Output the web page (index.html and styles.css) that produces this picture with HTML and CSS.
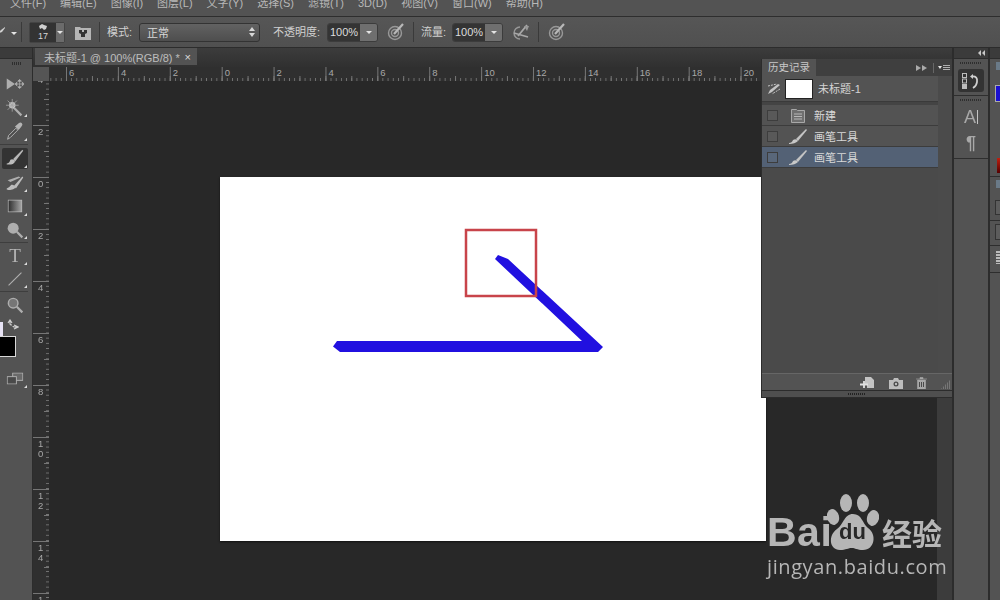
FILE: index.html
```html
<!DOCTYPE html>
<html lang="zh">
<head>
<meta charset="utf-8">
<title>Photoshop</title>
<link rel="stylesheet" href="styles.css">
</head>
<body>
<div class="app">
  <nav class="menu">
    <span>文件(F)</span><span>编辑(E)</span><span>图像(I)</span><span>图层(L)</span><span>文字(Y)</span><span>选择(S)</span><span>滤镜(T)</span><span>3D(D)</span><span>视图(V)</span><span>窗口(W)</span><span>帮助(H)</span>
  </nav>
  <div class="options">
    <svg class="opt-lead" width="14" height="14" viewBox="0 0 14 14"><path d="M-3 10 L1 6 L5 3 L5 4 L2 8 Z" fill="#cfcfcf"/></svg>
    <i class="caret lead-caret"></i>
    <i class="vsep sep-a"></i>
    <div class="preset">
      <div class="preset-well">
        <svg width="10" height="8" viewBox="0 0 10 8"><path d="M1 3 L4 1 L6 2 L9 3 L8 6 L6 7 L4 5 L2 6Z" fill="#d0d0d0"/></svg>
        <span>17</span>
      </div>
      <div class="preset-btn"><i class="caret"></i></div>
    </div>
    <svg class="folder" width="16" height="15" viewBox="0 0 16 15"><path d="M0 2h5l1 1h10v12H0z" fill="#b5b5b5"/><path d="M4 5h3v2h2V5h3v3l-2 1v3H6V9L4 8z" fill="#333"/></svg>
    <i class="vsep sep-b"></i>
    <label class="opt-label mode-label">模式:</label>
    <div class="select"><span>正常</span><svg width="6" height="10" viewBox="0 0 6 10"><path d="M3 0l3 4H0zM3 10l3-4H0z" fill="#d8d8d8"/></svg></div>
    <label class="opt-label opacity-label">不透明度:</label>
    <div class="num"><span>100%</span><b><i class="caret"></i></b></div>
    <svg class="air air-a" width="18" height="18" viewBox="0 0 18 18"><circle cx="8" cy="10" r="6.500" fill="none" stroke="#989898" stroke-width="1.400"/><circle cx="8" cy="10" r="3.500" fill="none" stroke="#989898" stroke-width="1.400"/><path d="M7 11 L16 1" stroke="#b8b8b8" stroke-width="2.200"/></svg>
    <i class="vsep sep-c"></i>
    <label class="opt-label flow-label">流量:</label>
    <div class="num"><span>100%</span><b><i class="caret"></i></b></div>
    <svg class="air air-b" width="18" height="18" viewBox="0 0 18 18"><path d="M8 4a6 6 0 1 0 0 12" fill="none" stroke="#989898" stroke-width="1.400"/><path d="M2 10 L16 14 M6 13 L15 2" stroke="#a8a8a8" stroke-width="1.800"/><path d="M12 3 L17 3 L15 8Z" fill="#989898"/></svg>
    <i class="vsep sep-d"></i>
    <svg class="air air-c" width="18" height="18" viewBox="0 0 18 18"><circle cx="8" cy="10" r="6.500" fill="none" stroke="#989898" stroke-width="1.400"/><circle cx="8" cy="10" r="3.500" fill="none" stroke="#989898" stroke-width="1.400"/><path d="M7 11 L16 1" stroke="#b8b8b8" stroke-width="2.200"/></svg>
  </div>

  <div class="main">
    <aside class="tools">
      <div class="dock-top"></div>
      <div class="grip tools-grip"></div>
      <div class="tool-list">
        <div class="tool t-move"><svg width="20" height="14" viewBox="0 0 20 14"><path d="M1 1 L10 7 L1 13Z" fill="#aeaeae"/><path d="M15 3v8M11 7h8M15 2l-2 2h4zM15 12l-2-2h4zM10 7l2-2v4zM20 7l-2-2v4z" stroke="#aeaeae" fill="#aeaeae" stroke-width=".8"/></svg></div>
        <div class="tool t-wand"><svg width="20" height="20" viewBox="0 0 20 20"><path d="M8 9 L17 18" stroke="#aeaeae" stroke-width="2.400"/><circle cx="7" cy="7" r="3.500" fill="#c4c4c4"/><path d="M7 0v14M0 7h14M2 2l10 10M12 2L2 12" stroke="#a4a4a4" stroke-width=".9"/></svg><i class="corner"></i></div>
        <div class="tool t-drop"><svg width="18" height="20" viewBox="0 0 18 20"><path d="M1 19 L2 15 L10 7 L12 9 L4 17Z" fill="#4a4a4a" stroke="#bcbcbc"/><path d="M9 5 L13 1.500 Q15 0 16.500 1.500 Q18 3 16 5 L13 9Z" fill="#b4b4b4"/></svg><i class="corner"></i></div>
        <div class="tool-sep sep-drop"></div>
        <div class="tool t-brush active"><svg width="20" height="20" viewBox="0 0 20 20"><path d="M8 11 L18 1 L19 2 L10 14Z" fill="#b8b8b8"/><path d="M1 16 Q4 16 5 12 Q8 10 10 14 Q8 18 1 17Z" fill="#bcbcbc"/></svg><i class="corner"></i></div>
        <div class="tool t-hist"><svg width="20" height="18" viewBox="0 0 20 18"><path d="M2 6 L14 2 L16 3 L5 8Z" fill="#aeaeae"/><path d="M9 12 L18 2 L19 3 L11 15Z" fill="#bcbcbc"/><path d="M1 15 Q4 14 6 11 Q9 10 11 14 Q7 18 1 16Z" fill="#bcbcbc"/></svg><i class="corner"></i></div>
        <div class="tool t-grad"><svg width="16" height="14" viewBox="0 0 16 14"><defs><linearGradient id="g"><stop offset="0" stop-color="#2c2c2c"/><stop offset="1" stop-color="#a8a8a8"/></linearGradient></defs><rect x=".5" y=".5" width="15" height="13" fill="url(#g)" stroke="#bcbcbc"/></svg><i class="corner"></i></div>
        <div class="tool t-dodge"><svg width="20" height="20" viewBox="0 0 20 20"><circle cx="8" cy="8" r="6" fill="#aeaeae"/><path d="M12 12 L18 18" stroke="#aeaeae" stroke-width="2.400"/></svg><i class="corner"></i></div>
        <div class="tool-sep sep-dodge"></div>
        <div class="tool t-type"><span>T</span><i class="corner"></i></div>
        <div class="tool t-line"><svg width="16" height="16" viewBox="0 0 16 16"><path d="M1 15 L15 1" stroke="#b0b0b0" stroke-width="1.200"/></svg><i class="corner"></i></div>
        <div class="tool-sep sep-line"></div>
        <div class="tool t-zoom"><svg width="18" height="18" viewBox="0 0 18 18"><circle cx="7" cy="7" r="5.200" fill="#767676" stroke="#aeaeae" stroke-width="1.600"/><path d="M11 11 L17 17" stroke="#aeaeae" stroke-width="2.400"/></svg></div>
        <div class="t-swap"><svg width="12" height="12" viewBox="0 0 12 12"><path d="M1 4 L3 1 L5 4M3 2v3q0 1 2 1M7 10 L11 8 L7 6M10 8H8q-2 0-2-1" fill="none" stroke="#d0d0d0" stroke-width="1.200"/></svg></div>
        <div class="swatches"><i class="sw-fg"></i><i class="sw-bg"></i></div>
        <div class="tool t-screen"><svg width="18" height="13" viewBox="0 0 18 13"><rect x="6.500" y=".5" width="11" height="8" fill="#6a6a6a" stroke="#b4b4b4"/><rect x=".5" y="4.500" width="10" height="8" fill="#4a4a4a" stroke="#b4b4b4"/></svg><i class="corner"></i></div>
      </div>
    </aside>

    <section class="workspace">
      <div class="tabbar">
        <div class="tab"><span>未标题-1 @ 100%(RGB/8) *</span><em>×</em></div>
      </div>
      <div class="hruler-row">
        <div class="ruler-corner"></div>
        <div class="hruler">
          <span>6</span><span>4</span><span>2</span><span>0</span><span>2</span><span>4</span><span>6</span><span>8</span><span>10</span><span>12</span><span>14</span><span>16</span><span>18</span><span>20</span>
        </div>
      </div>
      <div class="doc-row">
        <div class="vruler">
          <span>4</span><span>2</span><span>0</span><span>2</span><span>4</span><span>6</span><span>8</span><span>1<br>0</span><span>1<br>2</span><span>1<br>4</span><span>1</span>
        </div>
        <div class="canvas">
          <div class="artboard">
            <svg class="drawing" width="546" height="364" viewBox="220 177 546 364">
              <polygon points="333,346.500 337,341 582,341 495,259 498,255 508,259 603,347 598,352 340,352" fill="#2110e0"/>
              <rect x="466" y="230" width="70" height="66" fill="none" stroke="#c8444a" stroke-width="2.500"/>
            </svg>
          </div>
          <div class="doc-scroll"></div>
          <div class="watermark">
            <div class="wm-top">
              <span class="wm-bai">Bai</span>
              <div class="wm-paw">
                <svg width="52" height="56" viewBox="0 0 52 56"><ellipse cx="19" cy="9" rx="6" ry="9" fill="#b6b6b6"/><ellipse cx="36" cy="9" rx="6" ry="9" fill="#b6b6b6"/><ellipse cx="6" cy="23" rx="6" ry="8" fill="#b6b6b6" transform="rotate(-15 6 23)"/><ellipse cx="46" cy="24" rx="6" ry="8" fill="#b6b6b6" transform="rotate(15 46 24)"/><path d="M26 20 C35 20 35 29 41 34 C50 40 48 56 36 56 C30 56 28 54 25 54 C21 54 19 56 13 56 C2 56 1 41 10 35 C17 30 17 20 26 20Z" fill="#b6b6b6"/></svg>
                <span>du</span>
              </div>
              <span class="wm-cn">经验</span>
            </div>
            <div class="wm-url">jingyan.baidu.com</div>
          </div>
        </div>
      </div>
      <div class="history">
        <div class="hist-head">
          <div class="hist-tab">历史记录</div>
          <div class="hist-ctrl"><span class="ff"><i></i><i></i></span><i class="hist-div"></i><i class="caret small"></i><span class="lines"><i></i><i></i><i></i></span></div>
        </div>
        <div class="hist-body">
          <div class="hist-list">
            <div class="snap">
              <svg width="14" height="12" viewBox="0 0 14 12"><path d="M1 11 L3 7 L11 1 L13 2 L5 9Z" fill="#c4c4c4"/><path d="M1 3 L10 1M13 6 L5 11" stroke="#c4c4c4" stroke-dasharray="2 1"/></svg>
              <i class="thumb"></i>
              <span>未标题-1</span>
            </div>
            <div class="hist-gap"></div>
            <div class="row"><i class="chk"></i>
              <svg width="14" height="15" viewBox="0 0 18 15"><path d="M2.500 1.500h5l1 1h7v12h-13z" fill="#6f6f6f" stroke="#a8a8a8"/><path d="M5 6h8M5 8.500h8M5 11h8" stroke="#b8b8b8"/></svg>
              <span>新建</span></div>
            <div class="row"><i class="chk"></i>
              <svg width="18" height="15" viewBox="0 0 18 15"><path d="M7 10 L17 0 L18 1 L9 12Z" fill="#c4c4c4"/><path d="M0 14 Q3 14 4 11 Q7 9 9 12 Q6 15 0 15Z" fill="#c8c8c8"/></svg>
              <span>画笔工具</span></div>
            <div class="row sel"><i class="chk"></i>
              <svg width="18" height="15" viewBox="0 0 18 15"><path d="M7 10 L17 0 L18 1 L9 12Z" fill="#c4c4c4"/><path d="M0 14 Q3 14 4 11 Q7 9 9 12 Q6 15 0 15Z" fill="#c8c8c8"/></svg>
              <span>画笔工具</span></div>
          </div>
          <div class="hist-track"></div>
        </div>
        <div class="hist-foot">
          <svg class="fi-new" width="14" height="12" viewBox="0 0 14 12"><path d="M5 0h6l3 3v8H7V7H5z" fill="#c4c4c4"/><path d="M4 4v7M0 7.500h8" stroke="#e0e0e0" stroke-width="1.800"/></svg>
          <svg class="fi-cam" width="14" height="11" viewBox="0 0 14 11"><path d="M0 2h4l1-2h4l1 2h4v9H0z" fill="#bdbdbd"/><circle cx="7" cy="6" r="2.500" fill="#4a4a4a"/><circle cx="7" cy="6" r="1.200" fill="#bdbdbd"/></svg>
          <svg class="fi-bin" width="11" height="12" viewBox="0 0 11 12"><path d="M0 2h11M4 2V.5h3V2M1.500 3h8v9h-8z" fill="#a8a8a8" stroke="#a8a8a8" stroke-width=".6"/><path d="M3.500 5v5M5.500 5v5M7.500 5v5" stroke="#4a4a4a"/></svg>
          <i class="resize"></i>
        </div>
        <div class="hist-grip"><i></i></div>
      </div>
    </section>

    <aside class="dock-a">
      <div class="dock-top"><span class="rew"><i></i><i></i></span></div>
      <div class="dock-group g-one">
        <div class="grip"></div>
        <div class="dock-btn">
          <svg width="20" height="16" viewBox="0 0 20 16"><rect x="1.500" y=".5" width="4" height="4" fill="none" stroke="#bcbcbc"/><rect x="1.500" y="6" width="4" height="4" fill="none" stroke="#bcbcbc"/><rect x="1" y="11" width="5" height="5" fill="#bcbcbc"/><path d="M12 1 L9 3.500 L12 6Z" fill="#d0d0d0"/><path d="M11 3.500 Q17 3 16 9 Q15.500 13 12 15" fill="none" stroke="#d0d0d0" stroke-width="1.800"/></svg>
        </div>
      </div>
      <div class="dock-group g-two">
        <div class="grip"></div>
        <div class="dock-glyph ga">A<i></i></div>
        <div class="dock-glyph gp">¶</div>
      </div>
      <div class="dock-rest"></div>
    </aside>

    <aside class="dock-b">
      <div class="dock-top"></div>
      <div class="b-sec b1"><i class="b-tab"></i><i class="b-blue"></i><i class="b-red"></i></div>
      <div class="b-sec b2"><i class="b-tab"></i><i class="b-box"></i></div>
      <div class="b-sec b3"><i class="b-box"></i></div>
      <div class="b-sec b4"><i class="b-mark"></i></div>
      <div class="b-sec b5"></div>
    </aside>
  </div>
</div>
</body>
</html>
```
FILE: styles.css
```css
* { box-sizing: border-box; }
html, body { margin: 0; padding: 0; height: 100%; overflow: hidden; background: #535353; }
i, em { font-style: normal; display: block; }
.app {
  width: 1000px; height: 600px; display: flex; flex-direction: column; overflow: hidden;
  font-family: "Liberation Sans", "Noto Sans CJK SC", sans-serif; font-size: 11px; color: #cfcfcf;
  filter: blur(.35px);
}
.caret { width: 0; height: 0; border-left: 3px solid transparent; border-right: 3px solid transparent; border-top: 3px solid #e4e4e4; }

/* menu */
.menu { height: 17px; flex: none; display: flex; gap: 14px; padding-left: 10px; background: #535353; border-bottom: 1px solid #2e2e2e; line-height: 7px; color: #b8b8b8; font-size: 11px; overflow: hidden; white-space: nowrap; }

/* options */
.options { height: 31px; flex: none; display: flex; align-items: center; background: linear-gradient(#565656, #505050); border-bottom: 1px solid #2c2c2c; }
.opt-lead { margin-right: -14px; margin-top: -3px; }
.lead-caret { margin-left: 11px; margin-top: 2px; }
.vsep { width: 1px; height: 20px; background: #3a3a3a; }
.sep-a { margin-left: 4px; }
.preset { margin-left: 7px; height: 21px; width: 36px; display: flex; border: 1px solid #444; border-radius: 2px; }
.preset-well { width: 26px; background: #333; display: flex; flex-direction: column; align-items: center; font-size: 9px; line-height: 10px; color: #d8d8d8; }
.preset-btn { flex: 1; background: #6b6b6b; display: flex; align-items: center; justify-content: center; }
.folder { margin-left: 10px; }
.sep-b { margin-left: 8px; }
.opt-label { font-size: 11px; color: #d0d0d0; white-space: nowrap; padding-bottom: 2px; }
.mode-label { margin-left: 7px; width: 32px; }
.select { width: 121px; height: 19px; background: linear-gradient(#626262, #4e4e4e); border: 1px solid #333; border-radius: 3px; display: flex; align-items: center; justify-content: space-between; padding: 0 4px 0 7px; font-size: 11px; color: #d8d8d8; }
.opacity-label { margin-left: 13px; width: 54px; }
.num { width: 51px; height: 19px; display: flex; border: 1px solid #3c3c3c; border-radius: 3px; overflow: hidden; }
.num span { width: 32px; background: #343434; color: #dcdcdc; font-size: 11px; line-height: 17px; text-align: center; }
.num b { flex: 1; background: #6f6f6f; display: flex; align-items: center; justify-content: center; }
.air-a { margin-left: 9px; }
.sep-c { margin-left: 8px; }
.flow-label { margin-left: 7px; width: 31px; }
.air-b { margin-left: 9px; }
.sep-d { margin-left: 8px; }
.air-c { margin-left: 9px; }

/* main */
.main { flex: 1; display: flex; min-height: 0; }
.dock-top { height: 11px; flex: none; background: #3b3b3b; border-bottom: 1px solid #2c2c2c; display: flex; justify-content: flex-end; align-items: center; }
.grip { height: 3px; background: repeating-linear-gradient(90deg, #2e2e2e 0 1px, transparent 1px 2px); }

/* tools */
.tools { width: 33px; flex: none; background: #535353; border-right: 1px solid #2c2c2c; display: flex; flex-direction: column; }
.tools-grip { width: 10px; margin: 3px 0 0 12px; }
.tool-list { display: flex; flex-direction: column; flex: 1; }
.tool { position: relative; height: 23.500px; width: 26px; margin-left: 2px; display: flex; align-items: center; justify-content: center; flex: none; }
.tool svg { transform: scale(.92); }
.corner { position: absolute; right: 1px; bottom: 2px; width: 0; height: 0; border-left: 3px solid transparent; border-bottom: 3px solid #dcdcdc; }
.t-move { margin-top: 7.250px; }
.tool-sep { height: 1px; background: #3e3e3e; width: 28px; flex: none; margin: 1px 0 3px; }
.sep-dodge { margin-bottom: 0; }
.sep-line { margin-bottom: .75px; }
.t-brush.active { background: #333; height: 21px; border-radius: 2px; }
.t-brush.active .corner { bottom: 1px; }
.t-hist { margin-top: 2px; }
.t-type span { font-family: "Liberation Serif", serif; font-size: 19px; color: #b4b4b4; line-height: 1; }
.t-swap { height: 12px; margin: 2px 0 0 7px; flex: none; }
.swatches { position: relative; height: 35px; flex: none; margin-top: -9px; }
.sw-fg { position: absolute; left: 0; top: 0; width: 3px; height: 22px; background: #e6e2f4; }
.sw-bg { position: absolute; left: -2px; top: 14px; width: 18px; height: 21px; background: #000; border: 1px solid #d8d8d8; }
.t-screen { margin-top: 10px; }

/* workspace */
.workspace { position: relative; flex: 1; min-width: 0; display: flex; flex-direction: column; }
.tabbar { height: 19px; flex: none; background: linear-gradient(#3c3c3c, #303030); display: flex; align-items: flex-start; }
.tab { margin-left: 2px; width: 162px; height: 17px; background: #535353; display: flex; align-items: center; justify-content: space-between; padding: 0 6px 0 9px; font-size: 11px; color: #bdbdbd; white-space: nowrap; }
.tab em { font-size: 11px; color: #ddd; }
.hruler-row { height: 14px; flex: none; display: flex; background: #2f2f2f; }
.ruler-corner { width: 16px; flex: none; background: #555; }
.hruler {
  flex: 1; display: flex; overflow: hidden; padding-left: 17px; font-size: 9.500px; line-height: 11px; color: #a8a8a8; background-color: #2f2f2f;
  background-image:
    linear-gradient(90deg, #767676 1px, transparent 1px),
    linear-gradient(90deg, #767676 1px, transparent 1px),
    linear-gradient(90deg, #767676 1px, transparent 1px);
  background-size: 51.900px 100%, 25.950px 5px, 5.190px 3px;
  background-position: 17px 0, 17px 100%, 17px 100%;
  background-repeat: repeat-x;
}
.hruler span { flex: 0 0 51.900px; padding-left: 3px; }
.doc-row { flex: 1; display: flex; min-height: 0; }
.vruler {
  width: 16px; flex: none; overflow: hidden; display: flex; flex-direction: column;
  font-size: 9.500px; line-height: 10px; color: #a8a8a8; background-color: #2f2f2f;
  background-image:
    linear-gradient(#767676 1px, transparent 1px),
    linear-gradient(#767676 1px, transparent 1px),
    linear-gradient(#767676 1px, transparent 1px);
  background-size: 100% 52px, 5px 26px, 3px 5.200px;
  background-position: 0 44px, 100% 44px, 100% 44px;
  background-repeat: repeat-y;
}
.vruler span { flex: 0 0 52px; padding: 2px 0 0 5px; }
.vruler span:first-child { flex-basis: 50px; padding-top: 0; margin-top: -6px; }
.canvas { flex: 1; position: relative; background: #282828; overflow: hidden; }
.artboard { position: absolute; left: 171px; top: 96px; width: 546px; height: 364px; background: #fff; box-shadow: 0 1px 2px #111; }
.drawing { display: block; }
.doc-scroll { position: absolute; right: 0; top: 0; bottom: 0; width: 15px; background: #3c3c3c; }

/* watermark */
.watermark { position: absolute; left: 718px; top: 413px; width: 182px; color: #b6b6b6; }
.wm-top { display: flex; align-items: flex-end; height: 56px; }
.wm-bai { font-family: "Liberation Sans", sans-serif; font-weight: 700; font-size: 41px; line-height: 36px; letter-spacing: .5px; width: 60px; }
.wm-paw { position: relative; width: 52px; height: 56px; }
.wm-paw svg { display: block; }
.wm-paw span { position: absolute; left: 12px; top: 26px; font-weight: 700; font-size: 22px; line-height: 24px; color: #282828; }
.wm-cn { font-family: "Noto Sans CJK SC", sans-serif; font-weight: 700; font-size: 30px; line-height: 36px; margin-left: 3px; }
.wm-url { font-family: "Open Sans", sans-serif; font-size: 20px; line-height: 26px; letter-spacing: .6px; margin-top: 4px; }

/* history */
.history { position: absolute; left: 728px; top: 11px; width: 192px; height: 339px; background: #535353; border: 1px solid #2c2c2c; border-width: 0 1px 1px 1px; display: flex; flex-direction: column; }
.hist-head { height: 17px; flex: none; background: #3f3f3f; display: flex; justify-content: space-between; }
.hist-tab { width: 54px; background: #535353; text-align: center; font-size: 10.500px; line-height: 17px; color: #c8c8c8; }
.hist-ctrl { display: flex; align-items: center; gap: 4px; padding-right: 2px; }
.ff { display: flex; gap: 1px; margin-right: 2px; }
.ff i { width: 0; height: 0; border-left: 5px solid #aaa; border-top: 3.500px solid transparent; border-bottom: 3.500px solid transparent; }
.hist-div { width: 1px; height: 10px; background: #666; }
.caret.small { border-left-width: 2.500px; border-right-width: 2.500px; margin-right: -3px; }
.lines { display: flex; flex-direction: column; gap: 1px; }
.lines i { width: 7px; height: 1px; background: #b0b0b0; }
.hist-body { flex: 1; display: flex; min-height: 0; }
.hist-list { width: 176px; background: #4a4a4a; display: flex; flex-direction: column; }
.hist-track { flex: 1; background: #4b4b4b; }
.snap { height: 26px; flex: none; background: #535353; border-bottom: 1px solid #3a3a3a; display: flex; align-items: center; padding-left: 5px; color: #d4d4d4; font-size: 11px; }
.snap span { padding-bottom: 2px; }
.thumb { width: 28px; height: 20px; background: #fff; border: 1px solid #222; margin: 0 5px 0 4px; }
.hist-gap { height: 3px; flex: none; background: #444; }
.row { height: 21px; flex: none; background: #535353; border-bottom: 1px solid #3c3c3c; display: flex; align-items: center; padding-left: 5px; color: #d8d8d8; font-size: 11px; }
.row svg { margin-left: 11px; width: 18px; }
.row span { margin-left: 7px; padding-bottom: 1px; }
.row.sel { background: #536175; }
.chk { width: 11px; height: 11px; border: 1px solid #3d3d3d; background: rgba(255,255,255,.04); }
.hist-foot { position: relative; height: 18px; flex: none; background: #535353; border-top: 1px solid #666; border-bottom: 1px solid #2c2c2c; }
.fi-new { position: absolute; left: 98px; top: 3px; }
.fi-cam { position: absolute; left: 127px; top: 4px; }
.fi-bin { position: absolute; left: 154px; top: 3px; }
.resize { position: absolute; right: 1px; top: 5px; width: 10px; height: 10px; background: repeating-linear-gradient(90deg, #777 0 1px, transparent 1px 2px); clip-path: polygon(100% 0, 100% 100%, 0 100%); }
.hist-grip { height: 6px; flex: none; background: #4f4f4f; display: flex; justify-content: center; align-items: center; }
.hist-grip i { width: 18px; height: 2px; background: repeating-linear-gradient(90deg, #222 0 1px, transparent 1px 2px); }

/* docks */
.dock-a { width: 38px; flex: none; background: #535353; border-left: 2px solid #2c2c2c; border-right: 2px solid #2c2c2c; display: flex; flex-direction: column; }
.rew { display: flex; gap: 1px; margin-right: 3px; }
.rew i { width: 0; height: 0; border-right: 3px solid #c8c8c8; border-top: 3px solid transparent; border-bottom: 3px solid transparent; }
.dock-group { border-bottom: 1px solid #2e2e2e; flex: none; display: flex; flex-direction: column; align-items: center; }
.dock-group .grip { width: 22px; margin-top: 3px; height: 2px; }
.g-one { height: 37px; }
.dock-btn { width: 26px; height: 23px; margin-top: 5px; background: #333; border-radius: 3px; display: flex; align-items: center; justify-content: center; }
.g-two { height: 63px; }
.dock-glyph { color: #a8a8a8; font-size: 18px; line-height: 20px; display: flex; align-items: center; }
.ga { margin-top: 6px; }
.ga i { width: 1px; height: 14px; background: #c4c4c4; margin-left: 1px; }
.gp { margin-top: 6px; font-size: 18px; font-weight: 700; }
.dock-rest { flex: 1; }
.dock-b { width: 10px; flex: none; background: #535353; display: flex; flex-direction: column; }
.b-sec { position: relative; flex: none; border-bottom: 1px solid #2e2e2e; }
.b1 { height: 118px; }
.b2 { height: 44px; }
.b3 { height: 25px; }
.b4 { height: 27px; }
.b5 { flex: 1; border: 0; }
.b-tab { position: absolute; left: 6px; top: 3px; width: 4px; height: 8px; background: #6a7a88; }
.b-blue { position: absolute; left: 5px; top: 26px; width: 5px; height: 17px; background: #1a10d0; border: 1px solid #aaa; border-right: 0; }
.b-red { position: absolute; left: 7px; top: 99px; width: 3px; height: 15px; background: linear-gradient(#c02010, #500); }
.b-box { position: absolute; left: 5px; top: 23px; width: 5px; height: 15px; border: 1px solid #333; border-right: 0; background: #5c5c5c; }
.b3 .b-box { top: 3px; height: 16px; }
.b-mark { position: absolute; left: 6px; top: 5px; width: 4px; height: 13px; background: repeating-linear-gradient(#bbb 0 2px, #555 2px 3px); }
```
